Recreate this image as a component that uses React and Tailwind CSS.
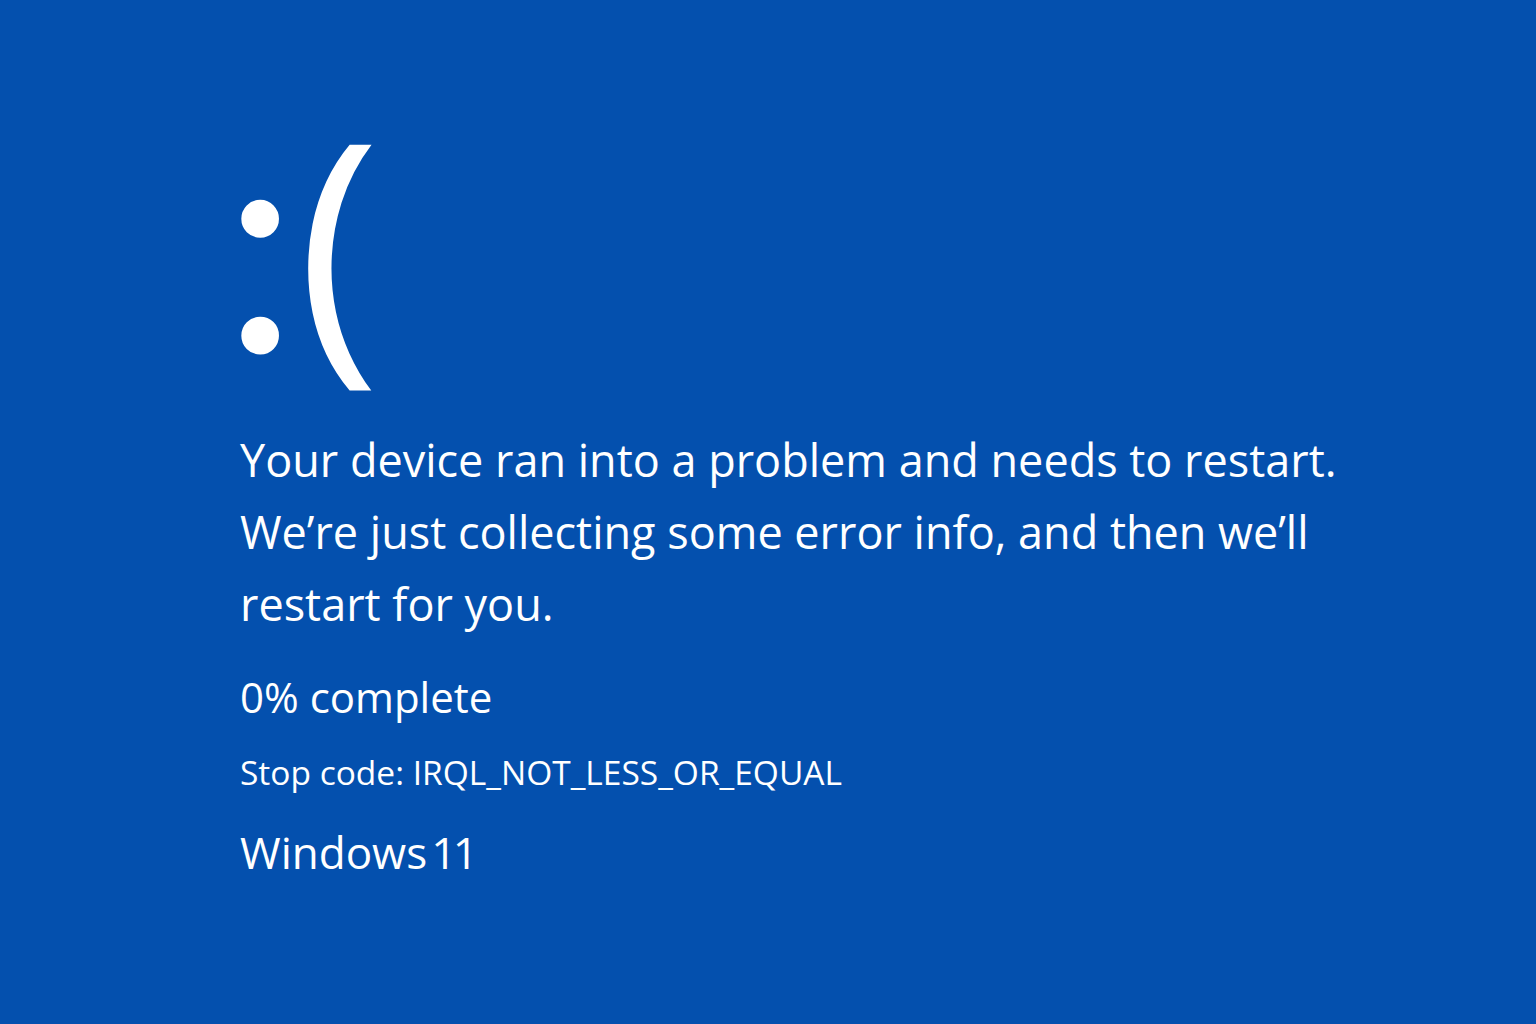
import React from 'react';

export default function App() {
    return (
        <div className="w-[1536px] h-[1024px] bg-[#0450ae] text-white overflow-hidden" style={{ fontFamily: '"Open Sans", "Noto Sans", sans-serif' }}>
            <div className="flex flex-col pl-[240px] pt-[78px]">
                {/* sad face */}
                <div className="h-[346px] flex items-baseline leading-none">
                    <span className="relative top-[4px] -ml-[24px] text-[320px] font-normal leading-none" style={{ fontFamily: '"Liberation Serif", serif' }}>:</span>
                    <span className="-ml-[8px] text-[282px] font-normal leading-none">(</span>
                </div>

                <div className="text-[45px] leading-[72px]">
                    <p>Your device ran into a problem and needs to restart.</p>
                    <p>We’re just collecting some error info, and then we’ll</p>
                    <p>restart for you.</p>
                </div>

                <p className="mt-[29px] text-[42px] leading-[56px]">0% complete</p>

                <p className="mt-[27px] text-[33.5px] leading-[40px]">Stop code: IRQL_NOT_LESS_OR_EQUAL</p>

                <p className="mt-[32px] flex gap-[4px] text-[44px] leading-[56px]">
                    <span>Windows</span>
                    <span className="tracking-[-0.08em]">11</span>
                </p>
            </div>
        </div>
    );
}
